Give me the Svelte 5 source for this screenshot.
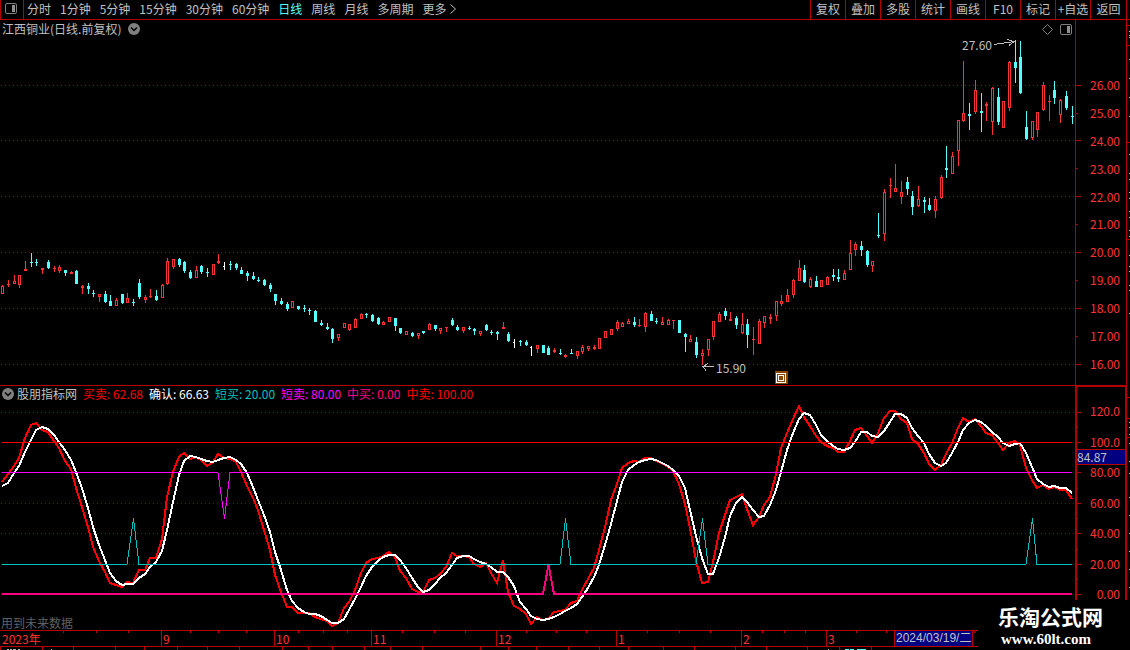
<script>
  const periods = ['分时', '1分钟', '5分钟', '15分钟', '30分钟', '60分钟', '日线', '周线', '月线', '多周期', '更多'];
  const tools = ['复权', '叠加', '多股', '统计', '画线', 'F10', '标记', '+自选', '返回'];
  let period = $state('日线');

  // One entry per session: kind, high, body top, body bottom, low (chart units).
  // u = hollow rise, r = flat rise, d = fall, w = unchanged
  const sessions = `
u285,286,294,294 r280,284,285,287 u275,281,284,284 u275,275,285,288 r261,269,271,271 d253,262,263,267 d259,262,263,266 r268,268,270,274 d260,262,268,269 r266,268,269,272
u265,267,271,273 d270,270,273,276 r271,272,274,274 d270,271,284,284 r285,286,288,294 d283,286,289,294 d290,293,294,297 u294,294,297,302 d291,294,302,303 d295,301,306,306
u298,300,306,306 d294,294,303,304 u293,298,303,303 d299,302,303,306 d279,283,297,299 u295,297,300,303 r289,296,297,298 d290,296,300,301 u284,285,298,298 u258,261,284,285
u259,259,267,269 d258,259,265,267 d261,262,271,273 d270,272,278,279 u266,270,278,278 d265,266,272,274 d268,272,273,277 u264,264,275,275 r254,261,263,264 w262,266,267,270
d261,264,265,270 d263,264,268,270 d267,270,274,274 d271,273,276,281 d272,276,279,280 d277,280,281,282 d279,280,285,286 d283,285,289,292 d294,294,301,305 d298,301,304,305
d302,304,309,311 u301,301,308,308 d306,306,309,310 d305,308,309,312 d308,310,311,315 d310,311,322,322 d320,323,325,326 d323,327,329,330 d328,329,339,343 u334,334,338,341
u323,323,328,328 u324,324,330,331 u318,319,328,328 u313,314,319,319 d313,314,315,318 d314,315,321,322 d317,318,324,325 u321,322,325,325 u317,317,322,322 d318,318,326,331
d328,328,333,334 u331,331,335,335 d332,333,336,337 u333,333,336,339 d331,331,333,334 u323,324,330,330 d325,325,329,331 u328,328,331,334 r327,327,328,332 d318,320,325,326
d325,327,330,331 u327,327,331,333 d326,328,329,330 d328,329,331,335 u331,331,334,336 d324,325,330,331 d330,332,333,335 d331,332,334,340 r322,327,329,329 d332,334,341,342
w339,342,343,348 d340,341,342,346 d340,342,345,346 w346,347,348,356 u345,345,349,353 d345,345,353,353 d346,348,355,355 r348,350,352,353 d349,353,354,355 r354,355,357,358
d349,353,354,354 u351,351,356,359 u345,347,352,354 u346,346,349,351 r345,347,349,350 u338,338,349,349 u331,331,338,338 u329,329,335,335 u320,322,329,331 u322,323,327,327
u319,321,324,324 d317,322,325,327 r319,325,326,327 u312,313,327,332 d311,314,321,321 d318,321,322,324 u317,322,325,325 u319,320,325,325 r320,320,321,329 d320,320,333,333
d333,334,337,352 u335,339,342,342 d337,342,355,358 u349,353,356,365 u339,339,350,356 u321,321,337,340 u312,314,322,322 d308,311,316,320 r312,319,321,321 d316,318,325,329
u313,324,333,334 d319,324,335,348 r327,339,340,355 u319,321,344,344 u316,316,323,328 r314,317,319,324 u301,301,316,321 u295,301,304,306 u289,295,302,302 u279,280,295,298
u260,268,281,281 d265,270,282,283 u277,279,287,288 d276,281,287,287 u280,280,287,287 u276,277,285,285 d269,275,277,281 d269,277,279,282 u270,273,280,280 u240,253,270,270
u242,244,250,256 d241,246,250,256 d250,251,265,267 u261,261,266,272 d213,235,236,238 u189,192,234,241 r178,185,186,198 u164,188,192,192 u181,192,197,204 d177,182,189,195
d191,196,207,215 u186,199,206,207 d197,200,202,213 d198,205,210,211 u196,199,211,218 u175,177,198,199 d146,168,170,178 u152,156,174,174 u120,120,151,166 u61,113,121,122
d103,114,116,130 u80,90,112,114 d93,111,113,132 r102,104,106,121 u87,88,122,135 d88,97,122,125 u101,101,128,128 u61,62,108,111 d40,62,68,83 d41,57,93,94
d111,127,139,140 u121,121,138,140 u112,112,130,137 u82,85,110,111 r95,101,102,121 d81,90,98,104 u99,100,115,123 d91,96,108,110 d106,116,117,124`;

  const xAt = (i) => Math.floor(2.85 + 5.687 * i);

  const candles = sessions.trim().split(/\s+/).map((s, i) => {
    const [high, top, bottom, low] = s.slice(1).split(',').map(Number);
    return { x: xAt(i), kind: s[0], high, top, bottom, low };
  });

  const fast = [
    482, 474, 466, 458, 438, 425, 423, 430, 432, 441, 448, 461, 469, 488, 507, 527, 547, 561, 572, 583,
    585, 587, 582, 583, 570, 570, 558, 558, 539, 497, 472, 457, 453, 459, 457, 460, 466, 462, 454, 458,
    459, 462, 472, 486, 498, 510, 530, 550, 575, 592, 607, 607, 613, 613, 613, 617, 619, 621, 626, 623,
    608, 602, 590, 573, 563, 559, 558, 556, 552, 557, 571, 578, 589, 592, 592, 580, 578, 574, 567, 553,
    556, 556, 557, 564, 567, 563, 573, 583, 560, 592, 606, 609, 614, 624, 617, 620, 619, 612, 611, 610,
    603, 601, 590, 579, 568, 550, 527, 500, 484, 468, 463, 461, 462, 458, 458, 461, 463, 467, 471, 484,
    504, 528, 561, 583, 582, 562, 533, 515, 500, 497, 494, 509, 525, 517, 505, 497, 474, 448, 433, 419,
    406, 417, 426, 436, 442, 446, 448, 452, 452, 441, 430, 428, 436, 443, 433, 418, 411, 411, 419, 423,
    439, 444, 453, 464, 470, 465, 454, 443, 428, 418, 422, 419, 426, 433, 435, 443, 450, 443, 441, 445,
    468, 480, 488, 485, 489, 487, 490, 490, 499
  ];
  const slow = [
    486, 483, 473, 466, 452, 440, 430, 427, 429, 435, 442, 450, 460, 472, 488, 508, 527, 545, 560, 573,
    581, 585, 584, 584, 578, 574, 567, 562, 551, 530, 502, 475, 461, 456, 457, 459, 461, 462, 460, 458,
    457, 460, 464, 473, 487, 500, 515, 532, 552, 570, 590, 601, 608, 612, 614, 614, 616, 620, 623, 623,
    619, 610, 599, 587, 576, 567, 561, 557, 555, 555, 560, 568, 578, 587, 592, 590, 584, 578, 573, 565,
    558, 556, 556, 559, 562, 564, 567, 572, 572, 577, 586, 602, 609, 616, 619, 620, 619, 617, 614, 611,
    608, 604, 597, 588, 577, 565, 545, 524, 501, 482, 470, 465, 462, 460, 459, 460, 463, 466, 470, 476,
    488, 510, 536, 558, 574, 574, 558, 537, 516, 503, 497, 502, 510, 517, 516, 505, 490, 472, 450, 433,
    419, 413, 415, 425, 435, 441, 446, 449, 450, 448, 442, 432, 432, 436, 437, 431, 422, 414, 414, 418,
    428, 436, 443, 454, 463, 466, 463, 453, 442, 430, 423, 420, 422, 426, 432, 437, 443, 446, 444, 443,
    453, 467, 479, 484, 487, 486, 488, 488, 493
  ];
  const points = (values) => values.map((y, i) => `${xAt(i)},${y}`).join(' ');

  // A level line that leaves its level for a single session at each given index.
  const level = (base, peak, hits) => {
    let d = `M2 ${base}`;
    for (const i of hits) d += `L${xAt(i - 1)} ${base}L${xAt(i) + 0.5} ${peak}L${xAt(i + 1)} ${base}`;
    return d + `L1072 ${base}`;
  };

  const priceLabels = [26, 25, 24, 23, 22, 21, 20, 19, 18, 17, 16].map((n) => n.toFixed(2));
  const priceMajor = [85, 140, 196, 252, 308, 364];
  const priceMinor = [113, 168, 224, 280, 336];
  const levelLabels = ['120.0', '100.0', '80.00', '60.00', '40.00', '20.00', '0.00'];
  const levelMajor = [412, 442, 472, 503, 533, 564, 594];
  const levelMinor = [427, 457, 488, 518, 549, 579];

  const legend = [
    { name: '买卖', value: '62.68', tone: 'red' },
    { name: '确认', value: '66.63', tone: 'white' },
    { name: '短买', value: '20.00', tone: 'teal' },
    { name: '短卖', value: '80.00', tone: 'magenta' },
    { name: '中买', value: '0.00', tone: 'pink' },
    { name: '中卖', value: '100.00', tone: 'red' }
  ];

  const months = ['2023年', '9', '10', '11', '12', '1', '2', '3'];
  const weekTicks = [63, 96, 128, 190, 218, 246, 298, 323, 347, 402, 434, 465, 526, 556, 586, 647, 679, 710, 762, 784, 805, 856, 886, 974];
  const tabTicks = [0, 42, 73, 115, 144, 177, 207, 239, 282, 308, 332, 364, 390, 422, 480, 508, 536, 568, 599, 628, 663, 694, 735, 766, 807, 839, 871];
  const edgeTicks = [25, 45, 142, 239, 397, 418, 437];
  const edgeDots = [31, 35, 37, 59, 78, 97, 116, 154, 173, 179, 192, 198, 211, 217, 230, 236, 255, 266, 271, 285, 290, 313, 422, 427, 434, 443, 461, 473, 497, 515, 533, 551, 569, 587];
</script>

{#snippet chevron()}
  <svg class="chevron" viewBox="0 0 12 12" aria-hidden="true">
    <circle cx="6" cy="6" r="6" fill="#808080" />
    <path d="M3 4.5 6 7.5 9 4.5" fill="none" stroke="#000" stroke-width="1.5" />
  </svg>
{/snippet}

{#snippet paneIcon()}
  <svg class="pane-icon" viewBox="0 0 12 11" aria-hidden="true">
    <rect x="0.5" y="0.5" width="11" height="10" rx="1.5" fill="none" stroke="#808080" />
    <rect x="7" y="2" width="3" height="7" fill="#909090" />
  </svg>
{/snippet}

<div class="terminal">
  <header class="toolbar">
    <button class="layout" aria-label="布局">{@render paneIcon()}</button>
    <nav class="periods">
      {#each periods as p}
        <button class:active={p === period} onclick={() => (period = p)}>{p}{#if p === '更多'}<svg class="more" viewBox="0 0 6 10" aria-hidden="true"><path d="M0.5 0.5 5.5 5 0.5 9.5" fill="none" stroke="currentColor" /></svg>{/if}</button>
      {/each}
    </nav>
    <div class="tools">
      {#each tools as t}<button>{t}</button>{/each}
    </div>
    <span class="toolbar-end"></span>
  </header>

  <main class="charts">
    <section class="plot">
      <svg class="canvas" viewBox="0 20 1082 365" preserveAspectRatio="none" shape-rendering="crispEdges" aria-hidden="true">
        {#each priceMajor as y}
          <path class="grid" d="M1 {y + 0.5}H1075" />
          <path class="axis" d="M1076 {y + 0.5}h5" />
        {/each}
        {#each priceMinor as y}<path class="axis" d="M1076 {y + 0.5}h2" />{/each}
        <path class="axis" d="M1075.5 20V385" />
        {#each candles as c}
          <g class={c.kind}>
            <rect x={c.x} y={c.high} width="1" height={c.low - c.high} />
            <rect x={c.x - 1} y={c.top} width={c.kind === 'w' ? 2 : 3} height={c.bottom - c.top} />
            {#if c.kind === 'u'}<rect class="hollow" x={c.x} y={c.top + 1} width="1" height={c.bottom - c.top - 2} />{/if}
          </g>
        {/each}
        <path class="pointer" d="M994 44.5 1014 41.5M1007 39.5 1014 41.5 1009 45.5M714 366.5H703M708 363.5 703 366.5 706 370.5" />
        <g>
          <rect x="775" y="371" width="13" height="13" fill="#8a4500" />
          <rect x="776.5" y="373.5" width="9" height="9" fill="none" stroke="#fff" />
          <rect x="778.5" y="375.5" width="5" height="5" fill="none" stroke="#fff" />
        </g>
      </svg>
      <div class="title">
        <h1>江西铜业(日线.前复权)</h1>
        <button aria-label="展开">{@render chevron()}</button>
        <span class="title-tools">
          <button aria-label="标记点"><svg class="diamond" viewBox="0 0 11 11" aria-hidden="true"><path d="M5.5 0.5 10.5 5.5 5.5 10.5 0.5 5.5Z" fill="none" stroke="#808080" /></svg></button>
          <button aria-label="侧栏">{@render paneIcon()}</button>
        </span>
      </div>
      <span class="note high">27.60</span>
      <span class="note low">15.90</span>
    </section>
    <div class="scale prices">
      {#each priceLabels as l}<span>{l}</span>{/each}
    </div>

    <section class="plot indicator">
      <svg class="canvas" viewBox="0 385 1082 245" preserveAspectRatio="none" shape-rendering="crispEdges" aria-hidden="true">
        {#each levelMajor as y}
          <path class="grid" d="M1 {y + 0.5}H1075" />
          <path class="axis" d="M1077 {y + 0.5}h4" />
        {/each}
        {#each levelMinor as y}<path class="axis" d="M1077 {y + 0.5}h1" />{/each}
        <path class="axis" d="M0 385.5H1082" />
        <path class="axis thick" d="M1082 386H1076V630" />
        <polyline class="line fast" points={points(fast)} />
        <polyline class="line slow" points={points(slow)} />
        <path class="line sell" d="M2 442.5H1072" />
        <path class="line short-sell" d={level(472.5, 518.5, [39])} />
        <path class="line short-buy" d={level(564.5, 518.5, [23, 99, 123, 181])} />
        <path class="line mid-buy" d={level(594, 565, [96])} />
      </svg>
      <div class="legend">
        <button aria-label="指标菜单">{@render chevron()}</button>
        <h2>股朋指标网</h2>
        {#each legend as item}<span class={item.tone}>{item.name}: {item.value}</span>{/each}
      </div>
      <p class="warning">用到未来数据</p>
    </section>
    <div class="scale levels">
      {#each levelLabels as l}<span>{l}</span>{/each}
      <output class="cursor-value">84.87</output>
    </div>

    <svg class="edge" viewBox="1126 20 4 610" preserveAspectRatio="none" shape-rendering="crispEdges" aria-hidden="true">
      <path class="axis" d="M1126.5 20V630" />
      {#each edgeTicks as y}<path class="axis" d="M1127 {y + 0.5}h3" />{/each}
      {#each edgeDots as y}<rect x="1129" y={y} width="1" height="1" fill="#c0c0c0" />{/each}
    </svg>
  </main>

  <footer class="timeline">
    <svg class="ticks" viewBox="0 630 1130 20" preserveAspectRatio="none" shape-rendering="crispEdges" aria-hidden="true">
      <path class="axis" d="M0 630.5H978M0 646.5H978" />
      {#each weekTicks as x}<path class="axis" d="M{x + 0.5} 631v2" />{/each}
      {#each tabTicks as x}<path class="axis" d="M{x + 0.5} 647v3" />{/each}
      <path d="M7 649.5h2M10 649.5h2M13 649.5h3M18 649.5h2M51 649.5h1M828 649.5h1" stroke="#c0c0c0" />
      <path d="M845 649.5h4M850 649.5h4M857 649.5h9" stroke="#54ffff" />
    </svg>
    <div class="months">
      {#each months as m}<span>{m}</span>{/each}
      <time datetime="2024-03-19">2024/03/19/二</time>
      <span></span>
    </div>
  </footer>

  <aside class="watermark">
    <strong>乐淘公式网</strong>
    <a href="http://www.60lt.com">www.60lt.com</a>
  </aside>
</div>

<style>
  :global(body) {
    margin: 0;
    background: #000;
  }
  .terminal {
    position: relative;
    display: grid;
    grid-template-rows: 20px minmax(610px, 1fr) 20px;
    min-height: 100vh;
    overflow: hidden;
    background: #000;
    color: #c0c0c0;
    font: 12px/14px 'Noto Sans CJK SC', sans-serif;
    white-space: nowrap;
  }
  button {
    display: flex;
    align-items: center;
    margin: 0;
    padding: 0;
    border: 0;
    background: none;
    color: inherit;
    font: inherit;
    cursor: pointer;
  }
  h1,
  h2,
  p {
    margin: 0;
    font: inherit;
  }

  .toolbar {
    display: flex;
    box-sizing: border-box;
    border-bottom: 1px solid #b40000;
    border-left: 1px solid #b40000;
  }
  .toolbar button {
    padding-bottom: 2px;
  }
  .layout {
    width: 23px;
    padding-left: 4px;
    border-right: 1px solid #b40000;
  }
  .periods {
    display: flex;
    flex: 1;
    gap: 9px;
    padding-left: 3px;
  }
  .active {
    color: #54ffff;
  }
  .more {
    width: 6px;
    height: 10px;
    margin-left: 4px;
  }
  .tools {
    display: flex;
  }
  .tools button {
    box-sizing: border-box;
    justify-content: center;
    width: 35px;
    border-left: 1px solid #b40000;
  }
  .tools button:last-child {
    width: 36px;
  }
  .toolbar-end {
    width: 4px;
    box-sizing: border-box;
    border-left: 1px solid #b40000;
  }
  .pane-icon {
    width: 12px;
    height: 11px;
  }
  .chevron {
    width: 12px;
    height: 12px;
  }
  .diamond {
    width: 11px;
    height: 11px;
  }

  .charts {
    display: grid;
    grid-template-columns: minmax(0, 1fr) 44px 4px;
    grid-template-rows: 365fr 245fr;
    min-height: 0;
  }
  .plot {
    position: relative;
    display: grid;
    grid-template: minmax(0, 1fr) / minmax(0, 1fr);
    min-height: 0;
  }
  .plot > * {
    grid-area: 1 / 1;
  }
  .canvas {
    display: block;
    width: 100%;
    height: 100%;
    min-height: 0;
  }
  .title,
  .legend {
    display: flex;
    align-items: center;
    align-self: start;
    height: 18px;
  }
  .title {
    gap: 7px;
    padding-left: 2px;
  }
  .title-tools {
    display: flex;
    gap: 7px;
    margin-left: auto;
    padding-right: 10px;
  }
  .legend {
    gap: 6px;
    padding-left: 2px;
  }
  .legend button {
    margin-right: -3px;
  }
  .note {
    position: absolute;
  }
  .high {
    top: 18px;
    right: 90px;
  }
  .low {
    bottom: 10px;
    right: 336px;
  }
  .warning {
    align-self: end;
    padding-left: 1px;
    color: #606060;
  }

  .scale {
    position: relative;
    display: flex;
    flex-direction: column;
    justify-content: space-between;
    box-sizing: border-box;
    padding-right: 6px;
    color: #ff3232;
    text-align: right;
  }
  .prices {
    padding-top: 58px;
    padding-bottom: 14px;
  }
  .levels {
    padding-top: 17px;
    padding-bottom: 29px;
    padding-right: 5px;
    border-top: 2px solid #b40000;
    border-right: 1px solid #b40000;
  }
  .cursor-value {
    position: absolute;
    top: 62px;
    right: 0;
    left: -5px;
    border-top: 1px solid #b40000;
    border-bottom: 1px solid #b40000;
    background: #000080;
    color: #c0c0c0;
    text-align: left;
  }
  .edge {
    grid-area: 1 / 3 / 3 / 4;
    width: 4px;
    height: 100%;
    min-height: 0;
  }

  .axis {
    fill: none;
    stroke: #b40000;
  }
  .thick {
    stroke-width: 2;
  }
  .grid {
    stroke: #a00000;
    stroke-dasharray: 1 3;
  }
  .indicator .grid {
    stroke: #800000;
  }
  .u,
  .r {
    fill: #ff3232;
  }
  .d {
    fill: #54ffff;
  }
  .w {
    fill: #fff;
  }
  .hollow {
    fill: #000;
  }
  .pointer {
    fill: none;
    stroke: #c0c0c0;
  }
  .line {
    fill: none;
  }
  .fast {
    stroke: #f00;
    stroke-width: 2;
  }
  .slow {
    stroke: #fff;
    stroke-width: 2;
  }
  .sell {
    stroke: #f00;
  }
  .short-sell {
    stroke: #f0f;
  }
  .short-buy {
    stroke: #00c0c0;
  }
  .mid-buy {
    stroke: #ff0080;
    stroke-width: 2;
  }
  .red {
    color: #f00;
  }
  .white {
    color: #fff;
  }
  .teal {
    color: #00c0c0;
  }
  .magenta {
    color: #f0f;
  }
  .pink {
    color: #ff0080;
  }

  .timeline {
    display: grid;
    grid-template: 20px / minmax(0, 1fr);
  }
  .timeline > * {
    grid-area: 1 / 1;
  }
  .ticks {
    width: 100%;
    height: 20px;
  }
  .months {
    display: grid;
    grid-template-columns: 161fr 113fr 97fr 125fr 120fr 125fr 85fr 68fr 78fr 158fr;
    height: 15px;
    padding-top: 1px;
    color: #ff3232;
  }
  .months > * {
    min-width: 0;
    padding-left: 1px;
    border-left: 1px solid #b40000;
    line-height: 15px;
  }
  .months > :first-child {
    border-left-color: transparent;
  }
  .months time {
    background: #000080;
    color: #c0c0c0;
    font-family: 'Liberation Sans', 'Noto Sans CJK SC', sans-serif;
  }

  .watermark {
    position: absolute;
    right: 0;
    bottom: 0;
    display: flex;
    flex-direction: column;
    box-sizing: border-box;
    width: 152px;
    height: 50px;
    padding: 6px 0 0 20px;
    background: #000;
    color: #fff;
  }
  .watermark strong {
    font: bold 21px/24px 'Liberation Sans', 'Noto Sans CJK SC', sans-serif;
  }
  .watermark a {
    padding-left: 3px;
    color: inherit;
    font: bold 15px/18px 'Liberation Serif', serif;
    text-decoration: none;
  }
</style>
